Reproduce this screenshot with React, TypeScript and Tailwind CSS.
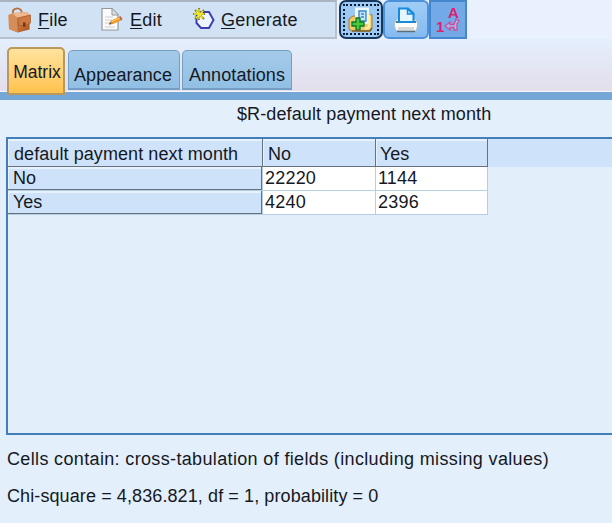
import type { ReactNode } from "react";

function Briefcase() {
  return (
    <svg width="26" height="26" viewBox="0 0 26 26" className="shrink-0">
      <defs>
        <linearGradient id="leather" x1="0" y1="0" x2="1" y2="1">
          <stop offset="0" stopColor="#e9ab7c" />
          <stop offset=".5" stopColor="#d07c42" />
          <stop offset="1" stopColor="#a94f1c" />
        </linearGradient>
      </defs>
      <path d="M6 7V3.500q4-4 8-.5l1 3" fill="none" stroke="#b5713f" strokeWidth="1.800" />
      <path d="M1.500 8l5-2 13-1 3.500 3-.5 14.500-11.500 3L2 22z" fill="url(#leather)" />
      <path d="M1.500 8l4-1.500L11 11v14.500L2 22z" fill="#d58d5a" />
      <path d="M5.500 6.500L19 5l4 3-12 3z" fill="#efb78c" />
      <path d="M11 11l12.500-3v8l-6 3-6.500-.5z" fill="#cf7940" stroke="#a25a2e" strokeWidth=".7" />
      <path d="M11 11v14" stroke="#a9653a" strokeWidth=".8" />
      <path d="M16 15.500h2.500v4H16z" fill="#6e3214" />
    </svg>
  );
}

function EditPage() {
  return (
    <svg width="24" height="25" viewBox="0 0 24 25" className="shrink-0">
      <path d="M2 1.500h10l6 6V23H2z" fill="#fafafa" stroke="#94979b" strokeWidth="1.200" />
      <path d="M12 2v6h6" fill="#dfe1e3" stroke="#96999c" />
      <path d="M5 10h8M5 13h7M5 16h5M5 20h10" stroke="#cdd0d2" />
      <path d="M9 17.500l2-4 9-4 2 3.500-9 4z" fill="#ee9526" />
      <path d="M12 14.500l8-3.500" stroke="#ffd36b" strokeWidth="1.200" />
      <path d="M19 10l1.500-1 2 3-1.500 1.500z" fill="#c66257" />
      <path d="M9 17.500l1-2.500 1.500 2z" fill="#494e54" />
    </svg>
  );
}

function Hexagon() {
  return (
    <svg width="22" height="23" viewBox="0 0 22 23" className="shrink-0">
      <path d="M8 4h8l4.500 8L16 20H8l-4.500-5V8z" fill="#eef5ff" stroke="#3f3fb4" strokeWidth="2" />
      <path d="M6 0v12M0 6h12M2 2l9 9M11 2l-9 9" stroke="#85851c" strokeWidth="2" />
      <path d="M6 1v10M1 6h10M3 3l7 7M10 3l-7 7" stroke="#f5eb2b" strokeWidth="1.300" />
    </svg>
  );
}

function AddOutput() {
  return (
    <svg width="26" height="26" viewBox="0 0 26 26">
      <path d="M1 12l4-3h16l3-2v14l-3 3H4l-3-2z" fill="#efcc69" stroke="#a77d2c" />
      <path d="M8 1.500h12V16H8z" fill="#f2faff" stroke="#eef8ff" strokeWidth="2" />
      <path d="M11 4h7v10h-7z" fill="#c5e6fb" stroke="#3889cd" strokeWidth="1.400" />
      <path d="M13 7h3M13 10h3" stroke="#3889cd" strokeWidth="1.500" />
      <path d="M21 8v12l-4 2" fill="none" stroke="#fff0b0" strokeWidth="2.500" />
      <path d="M8 11h4v4h4v4h-4v4H8v-4H4v-4h4z" fill="#45cb3b" stroke="#12752a" strokeWidth="1.300" />
      <path d="M4 24h18l2-3" fill="none" stroke="#7c612c" strokeWidth="1.500" />
    </svg>
  );
}

function Printer() {
  return (
    <svg width="26" height="26" viewBox="0 0 26 26">
      <path d="M4 12h18l2 3v7l-2 2H4l-2-2v-7z" fill="#f7f8f6" stroke="#b4c0c7" />
      <path d="M3 14h20v3H3z" fill="#68747c" />
      <path d="M6 1.500h9l5.500 5V15H6z" fill="#e5f6ff" stroke="#168bdc" strokeWidth="2" />
      <path d="M14.500 2v5h5.500z" fill="#b9e2fa" stroke="#168bdc" strokeWidth="1.500" />
      <path d="M2 16h22v4H2z" fill="#fdfdfa" />
      <path d="M5 20h16v3H5z" fill="#d6dbd8" />
      <path d="M4 24.500h18" stroke="#596d7b" strokeWidth="1.500" />
    </svg>
  );
}

function NumberToLabel() {
  return (
    <div className="relative h-[32px] w-[30px] font-bold leading-none text-[#dc1f70]">
      <span className="absolute left-[15px] top-[1px] text-[15px]">A</span>
      <span className="absolute left-[3px] top-[15px] text-[15px]">1</span>
      <svg className="absolute left-[11px] top-[14px]" width="17" height="15" viewBox="0 0 17 15">
        <path d="M1 8l5-4v2.500h4L12 1l3 2-2 3v6h-3V9.500H6V12z" fill="#a7b8ea" stroke="#cb4e9c" strokeWidth="1.300" />
      </svg>
    </div>
  );
}

function MenuItem({ icon, label, className }: { icon: ReactNode; label: string; className: string }) {
  return (
    <button className={`flex items-center whitespace-nowrap ${className}`}>
      {icon}
      <span><span className="underline decoration-1 underline-offset-2">{label[0]}</span>{label.slice(1)}</span>
    </button>
  );
}

const headerCell = "border-r border-b border-[#66717e] bg-[#cee3fa] shadow-[inset_1px_2px_0_#e7f2fd]";
const dataCell = "border-r border-b border-[#b6cee3] bg-white pl-[2px]";
const inactiveTab = "mt-[11px] h-[40px] rounded-t-[5px] border border-b-2 border-[#739fc4] bg-linear-to-b from-[#a4cae9] to-[#91c0e4] pt-[10px]";

export default function App() {
  return (
    <main className="flex h-[523px] w-[612px] flex-col overflow-hidden bg-[#e3effb] font-['Liberation_Sans',Arial,sans-serif] text-[18px] leading-[22px] text-[#15181f]">
      <header className="flex h-[39px] shrink-0 items-start bg-[#e8f1fd]">
        <nav className="flex h-[39px] w-[337px] items-center border-t-2 border-r-2 border-b-2 border-t-[#aab4c0] border-r-[#b9c1c9] border-b-[#b7c1cd] bg-[#d0e2f3] pl-[7px]">
          <MenuItem icon={<Briefcase />} label="File" className="w-[93px] gap-[5px] tracking-[0.2px]" />
          <MenuItem icon={<EditPage />} label="Edit" className="w-[93px] gap-[6px] tracking-[0.2px]" />
          <MenuItem icon={<Hexagon />} label="Generate" className="gap-[6px] tracking-[0.2px]" />
        </nav>
        <div className="ml-[2px] flex h-[39px]">
          <button aria-label="Add output" className="flex w-[44px] items-center justify-center rounded-[7px] border-2 border-[#17365c] bg-[#9bc9f3] p-[2px]">
            <span className="flex h-full w-full items-center justify-center border-2 border-dotted border-[#071b34]"><AddOutput /></span>
          </button>
          <button aria-label="Print" className="flex w-[46px] items-center justify-center rounded-[6px] border-2 border-[#4c92db] bg-linear-to-b from-[#9fcdf6] to-[#86baf0]"><Printer /></button>
          <button aria-label="Values and labels" className="flex w-[38px] items-center justify-center border-2 border-[#4686d1] bg-[#73a9e7]"><NumberToLabel /></button>
        </div>
      </header>
      <nav className="flex h-[61px] shrink-0 items-start border-b-8 border-[#75a7d6] bg-linear-to-b from-[#e4effd] to-[#e3deea] pl-[7px] shadow-[inset_0_-1px_0_#f5f7fc]">
        <button className="mt-[8px] h-[48px] w-[58px] rounded-t-[5px] border-2 border-[#b9995d] bg-linear-to-b from-[#ffe39d] to-[#ffc24b] pt-[2px] pl-[2px] text-[17.500px]">Matrix</button>
        <button className={`${inactiveTab} ml-[3px] w-[112px] pr-[2px] tracking-[0.1px]`}>Appearance</button>
        <button className={`${inactiveTab} ml-[2px] w-[110px] tracking-[0.1px]`}>Annotations</button>
      </nav>
      <h1 className="h-[37px] shrink-0 pt-[3px] pl-[237px] tracking-[0.11px]">$R-default payment next month</h1>
      <section className="ml-[6px] flex h-[298px] shrink-0 flex-col border-2 border-r-0 border-[#427eb8] bg-[#e2effb]">
        <div className="flex h-[28px] shrink-0 bg-[#cee3fa]">
          <div className={`${headerCell} w-[255px] pt-[4px] pl-[6px] tracking-[0.08px]`}>default payment next month</div>
          <div className={`${headerCell} w-[113px] pt-[4px] pl-[5px]`}>No</div>
          <div className={`${headerCell} w-[112px] pt-[4px] pl-[4px]`}>Yes</div>
        </div>
        {[["No", "22220", "1144"], ["Yes", "4240", "2396"]].map(([name, no, yes]) => (
          <div className="flex h-[24px] shrink-0" key={name}>
            <div className="w-[255px] border-r border-b border-[#b6cee3]">
              <div className={`${headerCell} h-full pl-[5px]`}>{name}</div>
            </div>
            <div className={`${dataCell} w-[113px] tracking-[0.2px]`}>{no}</div>
            <div className={`${dataCell} w-[112px] tracking-[0.2px]`}>{yes}</div>
          </div>
        ))}
      </section>
      <footer className="pt-[13px] pl-[7px] whitespace-nowrap">
        <p className="h-[37px] tracking-[0.35px]">Cells contain: cross-tabulation of fields (including missing values)</p>
        <p className="tracking-[0.1px]">Chi-square = 4,836.821, df = 1, probability = 0</p>
      </footer>
    </main>
  );
}
